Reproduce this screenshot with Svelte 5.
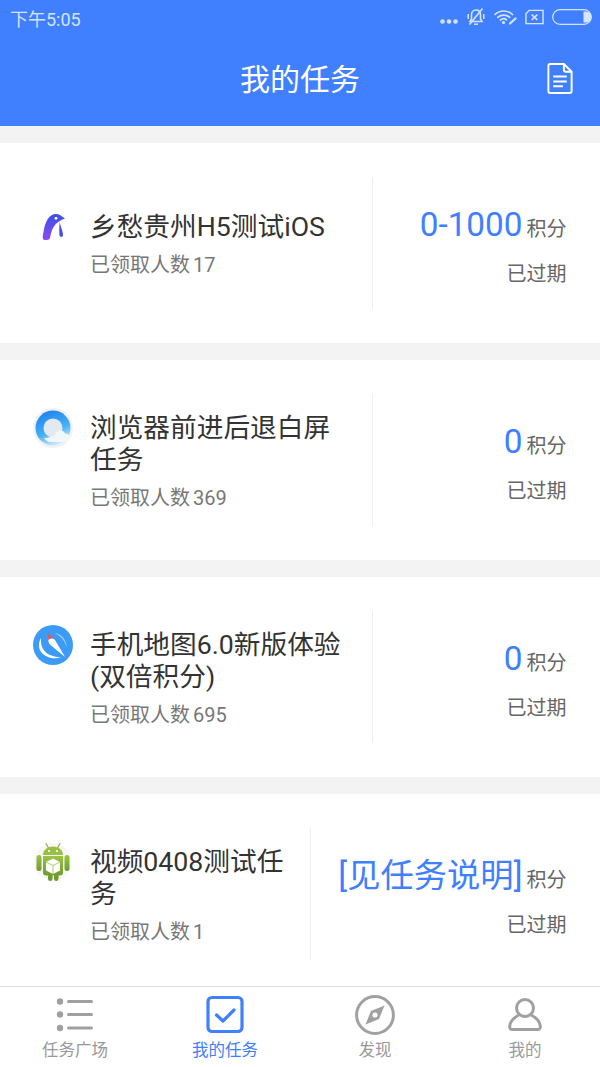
<script lang="ts">
  const tasks = [
    { icon: 'penguin', title: '乡愁贵州H5测试iOS', count: 17, points: '0-1000' },
    { icon: 'browser', title: '浏览器前进后退白屏任务', count: 369, points: '0' },
    { icon: 'compass', title: '手机地图6.0新版体验(双倍积分)', count: 695, points: '0' },
    { icon: 'android', title: '视频0408测试任务', count: 1, points: '[见任务说明]' },
  ];
</script>

<div class="page">
  <header>
    <div class="status">
      <span class="time">下午5:05</span>
      <div class="status-icons">
        <svg class="dots" viewBox="0 0 18 5" aria-hidden="true">
          <circle cx="2.500" cy="2.500" r="2.300" /><circle cx="9" cy="2.500" r="2.300" /><circle cx="15.500" cy="2.500" r="2.300" />
        </svg>
        <svg class="bell" viewBox="0 0 20 20" aria-hidden="true">
          <path d="M10 3c3 0 4.500 2.300 4.500 5v4l1.500 2.500H4L5.500 12V8c0-2.700 1.500-5 4.500-5z" fill="none" stroke-width="1.600" />
          <path d="M8 16.500h4v1.500H8zM1.500 7h1.500v5H1.500zM17 7h1.500v5H17z" class="solid" />
          <path d="M16.500 1.500 3.500 17.500" fill="none" stroke-width="1.600" />
        </svg>
        <svg class="wifi" viewBox="0 0 23 16" aria-hidden="true">
          <g fill="none" stroke-width="1.700" stroke-linecap="round">
            <path d="M1 5.500C6 .8 13.500 .8 18.500 5.500" />
            <path d="M3.800 8.300C7 5.300 12.500 5.300 15.700 8.300" />
            <path d="M6.500 11C8.300 9.500 10.800 9.500 12.500 10.800" />
            <path d="M16 14.500 21.500 9.500" stroke-width="2.200" />
          </g>
          <circle cx="9.500" cy="13.500" r="1.600" class="solid" />
        </svg>
        <svg class="sim" viewBox="0 0 20 16" aria-hidden="true">
          <path d="M4.500 1H19v14H1V4.500z" fill="none" stroke-width="1.500" />
          <path d="M7 5.500l6 5.500M13 5.500l-6 5.500" fill="none" stroke-width="1.700" />
        </svg>
        <svg class="battery" viewBox="0 0 40 16" aria-hidden="true">
          <rect x=".7" y=".7" width="38.600" height="14.600" rx="7.300" fill="none" stroke-width="1.200" />
          <path d="M31.500 2.500h2.500a5.500 5.500 0 0 1 0 11h-2.500z" class="solid" />
        </svg>
      </div>
    </div>
    <div class="nav">
      <h1>我的任务</h1>
      <svg class="doc" viewBox="0 0 26 32" aria-hidden="true">
        <path d="M3 1h14l8 8v20a2 2 0 0 1-2 2H3a2 2 0 0 1-2-2V3a2 2 0 0 1 2-2z" />
        <path d="M17 1v6a2 2 0 0 0 2 2h6" />
        <path d="M6 14h14M6 19h14M6 24h10" />
      </svg>
    </div>
  </header>

  <main>
    {#each tasks as task}
      <article>
        <div class="info">
          <div class="head">
            <div class="icon">
              {#if task.icon === 'penguin'}
                <svg viewBox="0 0 40 40" aria-hidden="true">
                  <defs>
                    <linearGradient id="peng" x1="0" y1="0" x2="0" y2="1">
                      <stop offset="0" stop-color="#3c50e4" />
                      <stop offset="1" stop-color="#8a4cf0" />
                    </linearGradient>
                  </defs>
                  <path d="M12 33C9 33 9.500 30 10.500 25 12 15 16 7 23 7c3 0 5.500 2 9 4.500-3 1-4.500 2-6 3C21 17 18 24 17 31c-.5 2-3 2-5 2z" fill="url(#peng)" />
                  <path d="M26.500 15c1 4 3.500 10 3.500 13 0 2.500-3 2.500-3.500.5-.5-4.500 0-9.500 0-13.500z" fill="#4450e2" />
                  <circle cx="23" cy="11.300" r="1.400" fill="#fff" />
                </svg>
              {:else if task.icon === 'browser'}
                <svg viewBox="0 0 40 40" aria-hidden="true">
                  <defs>
                    <linearGradient id="qq" x1=".2" y1="0" x2=".6" y2="1">
                      <stop offset="0" stop-color="#1a80f0" />
                      <stop offset=".6" stop-color="#46b0f4" />
                      <stop offset="1" stop-color="#d8eefb" />
                    </linearGradient>
                  </defs>
                  <circle cx="20" cy="20" r="20" fill="#f0f2f5" />
                  <circle cx="20" cy="20" r="17.500" fill="url(#qq)" />
                  <circle cx="20" cy="20" r="9.500" fill="#e3e9f0" />
                  <path d="M11 30c5 0 11-2 13-6 2.500-2.500 7-2 8 1.500 3 0 5 2 5 4.500s-2 4-5 4H18c-3 0-5-1.500-7-4z" fill="#f2f7fc" />
                </svg>
              {:else if task.icon === 'compass'}
                <svg viewBox="0 0 40 40" aria-hidden="true">
                  <circle cx="20" cy="20" r="20" fill="#3c9bf7" />
                  <path d="M8 13C4 20 6 27 12 30.500c5 3 11 3.500 16 2-7-.5-13-2.500-16.500-6.500C8.500 22.500 7.500 18 8 13z" fill="#fff" />
                  <path d="M22 8c6 1 11 6 12 15-2-7-6-12-12-15z" fill="#a8d6fb" />
                  <path d="M15.500 14c1.500-1.500 4.500-1 6.500 1l10 17-14.500-12c-2-2-2.500-4-2-6z" fill="#fff" />
                  <path d="M15 8.500l6 5c-2.500-.5-4.500 0-5.500 2z" fill="#ef5350" />
                </svg>
              {:else}
                <svg viewBox="0 0 40 40" aria-hidden="true">
                  <defs>
                    <linearGradient id="droid" x1="0" y1="0" x2="0" y2="1">
                      <stop offset="0" stop-color="#9cc444" />
                      <stop offset="1" stop-color="#6f9c2c" />
                    </linearGradient>
                  </defs>
                  <circle cx="20" cy="20" r="19" fill="#f7f7f7" />
                  <path d="M13 1.500l2.500 4.500M27 1.500 24.500 6" stroke="#8fb53c" stroke-width="1.200" stroke-linecap="round" />
                  <path d="M10 13c0-5 4.500-8.500 10-8.500S30 8 30 13z" fill="#9abf42" />
                  <circle cx="16" cy="9" r="1.100" fill="#fff" />
                  <circle cx="24" cy="9" r="1.100" fill="#fff" />
                  <path d="M10 14h20v16.500a3 3 0 0 1-3 3H13a3 3 0 0 1-3-3z" fill="url(#droid)" />
                  <rect x="3.500" y="13" width="5" height="16" rx="2.500" fill="url(#droid)" />
                  <rect x="31.500" y="13" width="5" height="16" rx="2.500" fill="url(#droid)" />
                  <rect x="15" y="32" width="4.500" height="7" rx="2.200" fill="#6f9c2c" />
                  <rect x="21" y="32" width="4.500" height="7" rx="2.200" fill="#6f9c2c" />
                  <path d="M20 16.500l7 3.500v8.500l-7 3.500-7-3.500V20z" fill="#fff" />
                  <path d="M13 20l7 3.500 7-3.500M20 23.500V32" fill="none" stroke="#9abf42" stroke-width=".8" />
                </svg>
              {/if}
            </div>
            <h2>{task.title}</h2>
          </div>
          <p>已领取人数 {task.count}</p>
        </div>
        <div class="reward">
          <div class="points"><strong>{task.points}</strong><span>积分</span></div>
          <div class="state">已过期</div>
        </div>
      </article>
    {/each}
  </main>

  <nav class="tabs">
    <div class="tab">
      <svg viewBox="0 0 40 40" aria-hidden="true">
        <g fill="#a0a0a0">
          <circle cx="5" cy="6.500" r="3.200" /><circle cx="5" cy="19.500" r="3.200" /><circle cx="5" cy="33" r="3.200" />
          <rect x="12" y="5" width="26" height="3" rx="1.500" />
          <rect x="12" y="18" width="26" height="3" rx="1.500" />
          <rect x="12" y="31.500" width="26" height="3" rx="1.500" />
        </g>
      </svg>
      <span>任务广场</span>
    </div>
    <div class="tab active">
      <svg viewBox="0 0 40 40" aria-hidden="true">
        <rect x="3" y="2.500" width="34" height="34" rx="4" fill="none" stroke="#4080ff" stroke-width="3.200" />
        <path d="M11.500 20l6.500 6 11-11" fill="none" stroke="#4080ff" stroke-width="3.200" stroke-linecap="round" stroke-linejoin="round" />
      </svg>
      <span>我的任务</span>
    </div>
    <div class="tab">
      <svg viewBox="0 0 40 40" aria-hidden="true">
        <circle cx="20" cy="20" r="18.400" fill="none" stroke="#a0a0a0" stroke-width="3" />
        <path d="M29.500 10.500 24 24l-13.500 5.500L16 16z" fill="#a0a0a0" />
        <circle cx="20" cy="20" r="2.600" fill="#fff" />
      </svg>
      <span>发现</span>
    </div>
    <div class="tab">
      <svg viewBox="0 0 40 40" aria-hidden="true">
        <circle cx="20" cy="13" r="8.500" fill="none" stroke="#a0a0a0" stroke-width="3" />
        <path d="M14 20C8 23 5 28 4.700 31.500c-.2 2 .8 3 2.800 3h25c2 0 3-1 2.800-3C35 28 32 23 26 20" fill="none" stroke="#a0a0a0" stroke-width="3" />
      </svg>
      <span>我的</span>
    </div>
  </nav>
</div>

<style>
  :global(body) {
    margin: 0;
  }
  .page {
    display: flex;
    flex-direction: column;
    height: 100vh;
    overflow: hidden;
    background: #f3f3f3;
    font-family: Roboto, "Noto Sans CJK SC", sans-serif;
  }
  header {
    flex: none;
    height: 126px;
    background: #4080ff;
    color: #fff;
  }
  .status {
    display: flex;
    align-items: center;
    justify-content: space-between;
    height: 34px;
    padding: 0 8px 0 10px;
    color: #d5e3ff;
  }
  .time {
    padding-top: 2px;
    font-size: 18px;
  }
  .status-icons {
    display: flex;
    align-items: center;
    gap: 8px;
  }
  .status-icons svg {
    fill: none;
    stroke: #d5e3ff;
  }
  .status-icons .solid {
    fill: #d5e3ff;
    stroke: none;
  }
  .status-icons .dots {
    width: 18px;
    height: 5px;
    margin-top: 8px;
    fill: #d5e3ff;
    stroke: none;
  }
  .bell {
    width: 20px;
    height: 20px;
  }
  .wifi {
    width: 23px;
    height: 16px;
  }
  .sim {
    width: 19px;
    height: 16px;
  }
  .battery {
    width: 40px;
    height: 16px;
  }
  .nav {
    position: relative;
    display: flex;
    align-items: center;
    justify-content: center;
    height: 92px;
  }
  h1 {
    margin: 0;
    font-size: 30px;
    font-weight: 400;
    line-height: 1;
  }
  .doc {
    position: absolute;
    top: 29px;
    right: 27px;
    width: 26px;
    height: 31px;
    fill: none;
    stroke: #fff;
    stroke-width: 2;
  }
  main {
    flex: 1;
    min-height: 0;
    overflow: hidden;
    padding-top: 17px;
  }
  article {
    display: flex;
    height: 200px;
    box-sizing: border-box;
    padding: 34px 0;
    margin-bottom: 17px;
    background: #fff;
  }
  .info {
    flex: 1;
    min-width: 0;
    display: flex;
    flex-direction: column;
    justify-content: center;
    padding: 3px 20px 0 33px;
  }
  .head {
    display: flex;
    gap: 17px;
  }
  .icon {
    flex: none;
    width: 40px;
    height: 40px;
    margin: -4px 0;
  }
  .icon svg {
    display: block;
    width: 40px;
    height: 40px;
  }
  h2 {
    flex: 1;
    min-width: 0;
    margin: 0;
    font-size: 26.7px;
    font-weight: 400;
    line-height: 32px;
    color: #333;
  }
  .info p {
    margin: 9px 0 0 57px;
    font-size: 20px;
    line-height: 26px;
    word-spacing: -2px;
    color: #777;
  }
  .reward {
    flex: none;
    box-sizing: border-box;
    min-width: 228px;
    padding: 0 33.5px 0 27px;
    border-left: 1px solid #eee;
    text-align: right;
  }
  .points {
    display: flex;
    align-items: baseline;
    justify-content: flex-end;
    gap: 4px;
    margin-top: 26px;
    line-height: 44px;
  }
  .points strong {
    font-size: 33.3px;
    font-weight: 400;
    color: #4080ff;
  }
  .points span {
    font-size: 20px;
    color: #666;
  }
  .state {
    margin-top: 10px;
    font-size: 20px;
    line-height: 26px;
    color: #666;
  }
  .tabs {
    flex: none;
    display: grid;
    grid-template-columns: repeat(4, 1fr);
    height: 81px;
    box-sizing: border-box;
    background: #fff;
    border-top: 1px solid #ddd;
  }
  .tab {
    display: flex;
    flex-direction: column;
    align-items: center;
    padding-top: 8px;
    font-size: 16.5px;
    line-height: 24px;
    color: #999;
  }
  .tab svg {
    display: block;
    width: 40px;
    height: 40px;
    margin-bottom: 4px;
  }
  .tab.active {
    color: #4080ff;
  }
</style>
